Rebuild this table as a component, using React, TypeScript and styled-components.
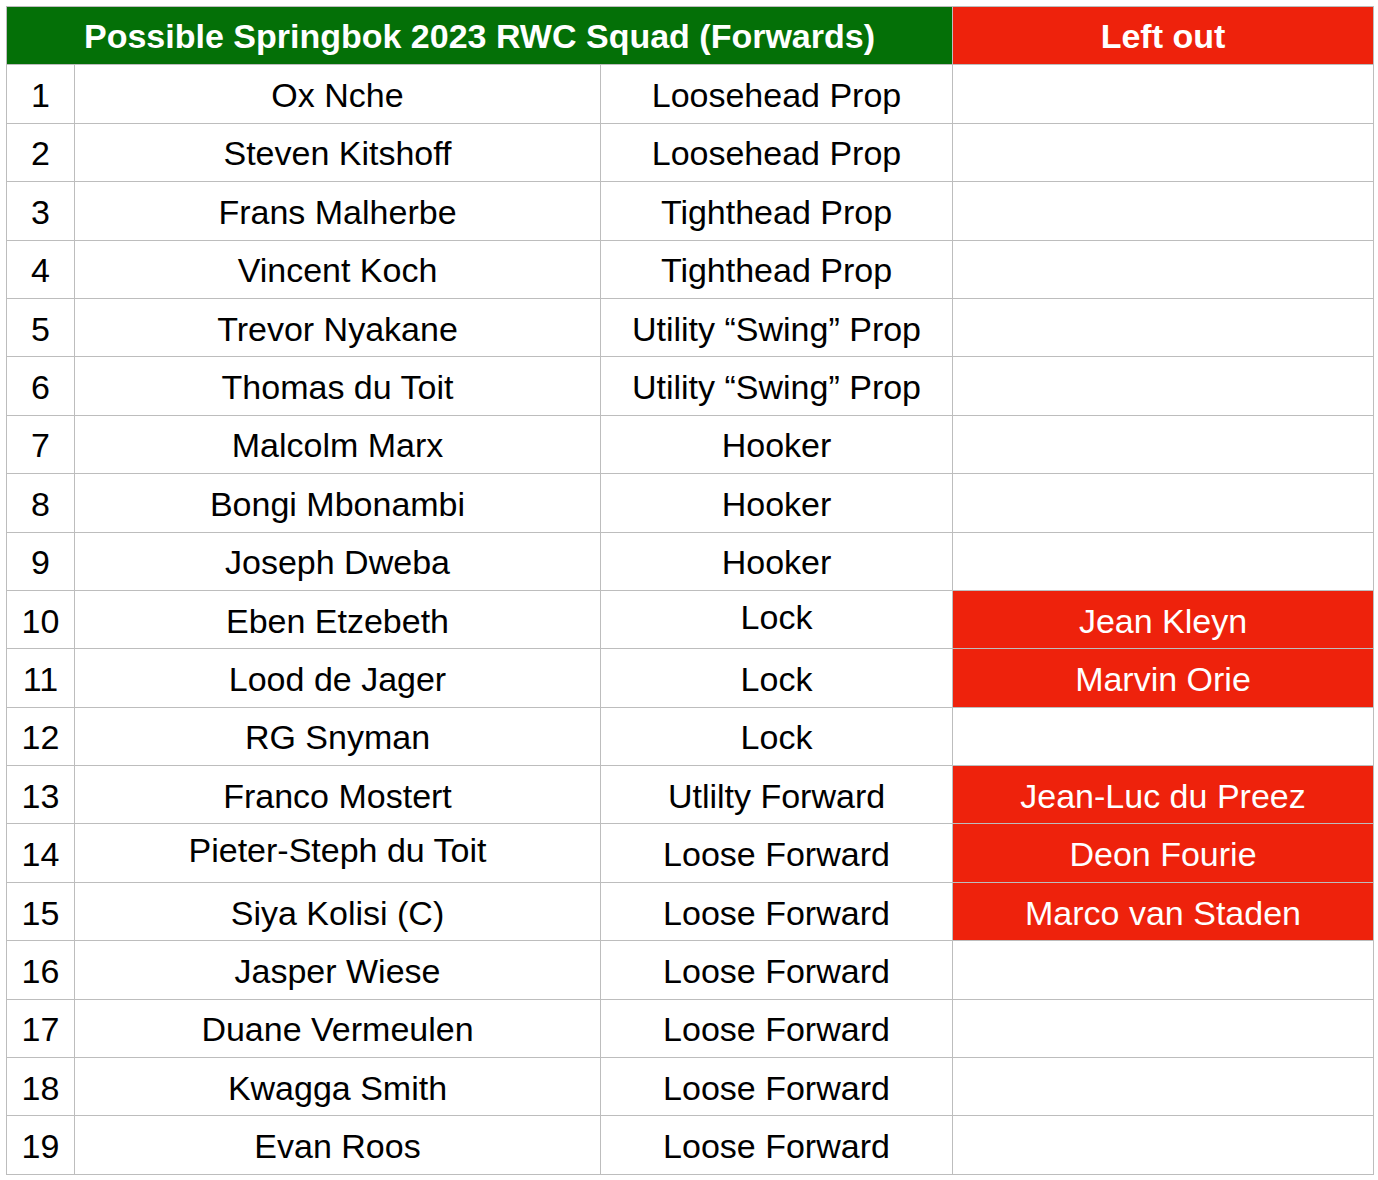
import React from 'react';
import styled, { createGlobalStyle } from 'styled-components';

const GlobalStyle = createGlobalStyle`
  body {
    margin: 0;
    background: #ffffff;
    font-family: "Liberation Sans", Arial, Helvetica, sans-serif;
  }
`;

const Page = styled.div`
  padding: 6px;
`;

const Sheet = styled.div`
  border-left: 1px solid #bdbdbd;
  border-top: 1px solid #bdbdbd;
  display: grid;
  grid-auto-rows: 58.4px;
  grid-template-columns: 68px 526px 352px 421px;
  width: max-content;
`;

const Cell = styled.div<{ $red?: boolean; $raised?: boolean }>`
  align-items: center;
  background: ${({ $red }) => ($red ? '#ee220c' : '#ffffff')};
  border-bottom: 1px solid #bdbdbd;
  border-right: 1px solid #bdbdbd;
  box-sizing: border-box;
  color: ${({ $red }) => ($red ? '#ffffff' : '#000000')};
  display: flex;
  font-size: 34px;
  justify-content: center;
  padding-bottom: ${({ $raised }) => ($raised ? '8px' : '0')};
  padding-top: 3px;
  white-space: nowrap;
`;

const HeadCell = styled(Cell)<{ $span?: number }>`
  background: ${({ $red }) => ($red ? '#ee220c' : '#047007')};
  color: #ffffff;
  font-weight: bold;
  grid-column: span ${({ $span }) => $span || 1};
  padding-top: 2px;
`;

type Player = {
  name: string;
  position: string;
  leftOut?: string;
  raiseName?: boolean;
  raisePosition?: boolean;
};

const players: Player[] = [
  { name: 'Ox Nche', position: 'Loosehead Prop' },
  { name: 'Steven Kitshoff', position: 'Loosehead Prop' },
  { name: 'Frans Malherbe', position: 'Tighthead Prop' },
  { name: 'Vincent Koch', position: 'Tighthead Prop' },
  { name: 'Trevor Nyakane', position: 'Utility “Swing” Prop' },
  { name: 'Thomas du Toit', position: 'Utility “Swing” Prop' },
  { name: 'Malcolm Marx', position: 'Hooker' },
  { name: 'Bongi Mbonambi', position: 'Hooker' },
  { name: 'Joseph Dweba', position: 'Hooker' },
  { name: 'Eben Etzebeth', position: 'Lock', leftOut: 'Jean Kleyn', raisePosition: true },
  { name: 'Lood de Jager', position: 'Lock', leftOut: 'Marvin Orie' },
  { name: 'RG Snyman', position: 'Lock' },
  { name: 'Franco Mostert', position: 'Utlilty Forward', leftOut: 'Jean-Luc du Preez' },
  { name: 'Pieter-Steph du Toit', position: 'Loose Forward', leftOut: 'Deon Fourie', raiseName: true },
  { name: 'Siya Kolisi (C)', position: 'Loose Forward', leftOut: 'Marco van Staden' },
  { name: 'Jasper Wiese', position: 'Loose Forward' },
  { name: 'Duane Vermeulen', position: 'Loose Forward' },
  { name: 'Kwagga Smith', position: 'Loose Forward' },
  { name: 'Evan Roos', position: 'Loose Forward' },
];

const App: React.FC = () => {
  return (
    <Page>
      <GlobalStyle />
      <Sheet>
        <HeadCell $span={3}>Possible Springbok 2023 RWC Squad (Forwards)</HeadCell>
        <HeadCell $red>Left out</HeadCell>
        {players.map((p, i) => (
          <React.Fragment key={p.name}>
            <Cell>{i + 1}</Cell>
            <Cell $raised={p.raiseName}>{p.name}</Cell>
            <Cell $raised={p.raisePosition}>{p.position}</Cell>
            <Cell $red={!!p.leftOut}>{p.leftOut}</Cell>
          </React.Fragment>
        ))}
      </Sheet>
    </Page>
  );
};

export default App;
